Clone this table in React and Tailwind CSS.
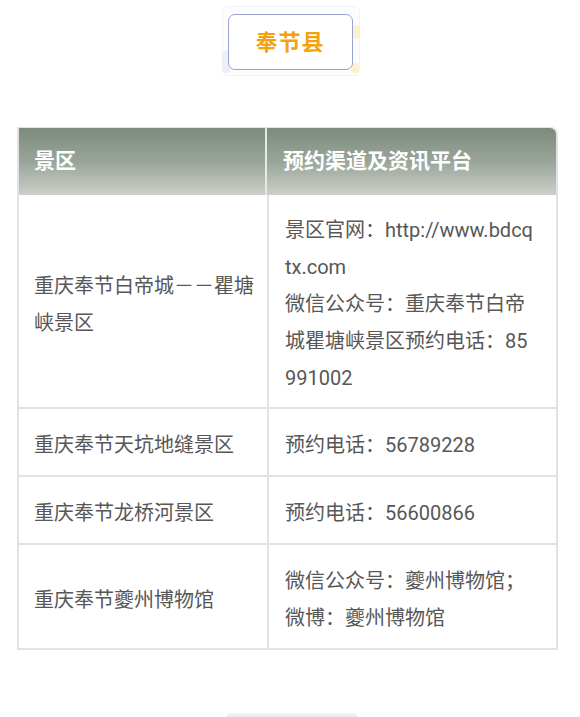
import React from "react";

const font = { fontFamily: 'Roboto, "Noto Sans CJK SC", "Noto Sans", sans-serif' };

function Title() {
  return (
    <div className="flex justify-center pt-[6px] pl-[1px]">
      <div className="relative w-[138px] h-[70px] pl-[5px] pr-[6px] pt-[7px] pb-[5px] rounded-[6px] border border-dotted border-[#e8eaf1] bg-[#fdfdfe]">
        <div className="absolute left-[-1px] bottom-[2px] w-[9px] h-[22px] rounded-full bg-[#e6e9f5] opacity-70" />
        <div className="absolute right-[-1px] top-[18px] w-[7px] h-[14px] rounded-full bg-[#fbeebe] opacity-80" />
        <div className="absolute right-[0px] bottom-[2px] w-[8px] h-[10px] rounded-full bg-[#fbeebe] opacity-80" />
        <div className="relative w-full h-full rounded-[7px] border-[1.5px] border-[#99a1cf] bg-white flex items-center justify-center">
          <span className="text-[22px] font-bold text-[#f3a210] tracking-[1px]" style={font}>奉节县</span>
        </div>
      </div>
    </div>
  );
}

function Row({ left, right, h }) {
  return (
    <div className="flex border-b-2 border-[#e2e2e2]" style={{ height: h }}>
      <div className="w-[250px] shrink-0 flex items-center pl-[15px] pr-[2px] pt-[7px] border-r-2 border-[#e2e2e2]">
        <div className="text-[20px] leading-[37px] text-[#575757] whitespace-nowrap">{left}</div>
      </div>
      <div className="flex-1 flex items-center px-[16px] pt-[7px]">
        <div className="text-[20px] leading-[37px] text-[#575757] whitespace-nowrap">{right}</div>
      </div>
    </div>
  );
}

export default function App() {
  return (
    <div className="w-[580px] h-[717px] bg-white overflow-hidden" style={font}>
      <Title />
      <div className="ml-[17px] mt-[51px] w-[541px] border-l-2 border-r-2 border-t border-[#e2e2e2] rounded-tr-[7px]">
        <div className="flex h-[67px] rounded-tr-[6px] bg-gradient-to-b from-[#7c8b7d] via-[#9aa59a] to-[#cbcfc8]">
          <div className="w-[248px] shrink-0 flex items-center pl-[15px] border-r-2 border-[#e6e9e4]">
            <span className="text-[21px] font-bold text-white">景区</span>
          </div>
          <div className="flex-1 flex items-center px-[16px]">
            <span className="text-[21px] font-bold text-white">预约渠道及资讯平台</span>
          </div>
        </div>
        <Row
          h={214}
          left={<>重庆奉节白帝城－－瞿塘<br />峡景区</>}
          right={<>景区官网：http://www.bdcq<br />tx.com<br />微信公众号：重庆奉节白帝<br />城瞿塘峡景区预约电话：85<br />991002</>}
        />
        <Row h={68} left="重庆奉节天坑地缝景区" right="预约电话：56789228" />
        <Row h={68} left="重庆奉节龙桥河景区" right="预约电话：56600866" />
        <Row h={105} left="重庆奉节夔州博物馆" right={<>微信公众号：夔州博物馆；<br />微博：夔州博物馆</>} />
      </div>
      <div className="flex justify-center mt-[63px] pl-[4px]">
        <div className="w-[130px] h-[4px] rounded-t-[3px] bg-gradient-to-b from-[#f4f4f4] to-[#e9e9e9]" />
      </div>
    </div>
  );
}
